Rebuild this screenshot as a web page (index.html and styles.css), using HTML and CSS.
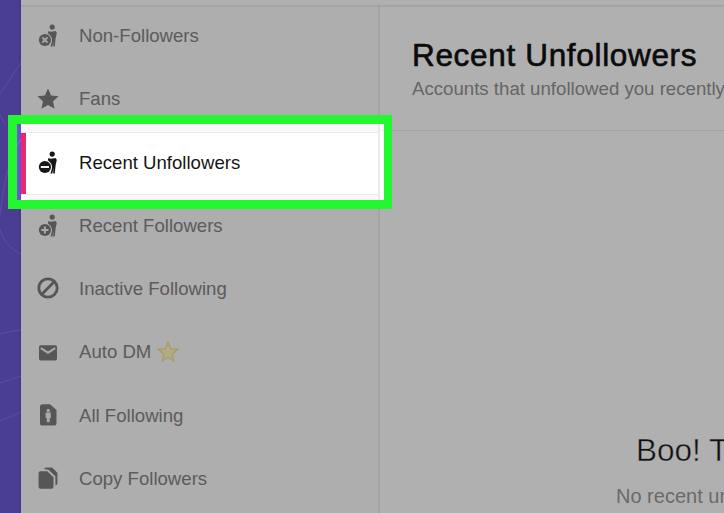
FILE: index.html
```
<!DOCTYPE html>
<html lang="en">
<head>
<meta charset="utf-8">
<title>Recent Unfollowers</title>
<link rel="stylesheet" href="styles.css">
</head>
<body>
<svg width="0" height="0" class="defs">
  <symbol id="person" viewBox="0 0 20 24">
    <circle cx="14.2" cy="3.1" r="2.6"/>
    <path d="M10.2 7.2L13 7.8 17.3 6.9Q19 7.4 18.7 9.6L17.6 14.2L16.8 22.6H15.2L15.4 17L14.4 22.6H12.5L14 17Q14.4 12.5 9.8 9.2Z"/>
    <circle cx="6.9" cy="16" r="6.1"/>
  </symbol>
</svg>
<div class="app">
  <aside class="rail">
    <svg viewBox="0 0 21 513" fill="none"><path d="M-2 97L21 63M0 114L5 125M0 215Q6 160 21 139M0 229Q3 245 21 254M0 334Q10 331 21 330M0 383L21 376M0 421L21 412"/></svg>
  </aside>
  <div class="page">
    <header class="topbar"></header>
    <div class="columns">
      <nav class="menu">
        <a class="item"><svg class="icon" viewBox="0 0 20 24"><use href="#person"/><path class="cut" d="M4.3 13.4l5.2 5.2m0-5.2l-5.2 5.2"/></svg><span>Non-Followers</span></a>
        <a class="item"><svg class="icon star" viewBox="0 0 22 22"><path d="M11 .4l3.1 7 7.5.8-5.6 5 1.6 7.5-6.6-3.8-6.6 3.8L6 13.2l-5.6-5 7.5-.8z"/></svg><span>Fans</span></a>
        <a class="item active"><svg class="icon" viewBox="0 0 20 24"><use href="#person"/><path class="cut" d="M2.8 16h8.2"/></svg><span>Recent Unfollowers</span></a>
        <a class="item"><svg class="icon" viewBox="0 0 20 24"><use href="#person"/><path class="cut" d="M3.3 16h7.2M6.9 12.4v7.2"/></svg><span>Recent Followers</span></a>
        <a class="item"><svg class="icon ban" viewBox="0 0 22 22"><circle cx="11" cy="10" r="9.2"/><path d="M4.6 16.4L17.4 3.6"/></svg><span>Inactive Following</span></a>
        <a class="item"><svg class="icon" viewBox="0 0 20 24"><rect x="1" y="5.2" width="18" height="15.3" rx="1.8"/><path class="cut" d="M2.8 8.1L10 12.7l7.2-4.6"/></svg><span>Auto DM</span><svg class="gold" viewBox="0 0 22 22"><path d="M11 1.2l2.7 6.5 7.1.6-5.4 4.7 1.6 7-6-3.6L5 20l1.6-7-5.4-4.7 7.1-.6z"/></svg></a>
        <a class="item"><svg class="icon" viewBox="0 0 20 24"><path d="M4.5 .2H12l6.5 5.8V18.9q0 2.6-2.6 2.6H4.4Q2 21.5 2 18.9V2.8q0-2.6 2.5-2.6z"/><g class="light"><circle cx="10.2" cy="6.4" r="1.6"/><path d="M7.6 8.5h5.2v5.4h-1.1v4.3H8.8v-4.3H7.6z"/></g></svg><span>All Following</span></a>
        <a class="item"><svg class="icon" viewBox="0 0 20 24"><path d="M6 2.1Q6.6.5 8.2.5H14l5.4 5.2V16.5q0 1.8-2 1.8V9.2L10.5 2.7z"/><path d="M2.4 4.2h6.9l6.2 6v9.6q0 2-2 2H2.6q-2 0-2-2V6.2q0-2 1.8-2z"/></svg><span>Copy Followers</span></a>
      </nav>
      <main class="content">
        <section class="head">
          <h1>Recent Unfollowers</h1>
          <p>Accounts that unfollowed you recently</p>
        </section>
        <section class="empty">
          <h2>Boo! T</h2>
          <p>No recent unfollowers</p>
        </section>
      </main>
    </div>
  </div>
</div>
<div class="spotlight"></div>
</body>
</html>
```
FILE: styles.css
```
* { box-sizing: border-box; }
body {
  margin: 0;
  width: 724px;
  height: 513px;
  overflow: hidden;
  font-family: "Liberation Sans", Arial, sans-serif;
}
.defs { position: absolute; }
.app { display: flex; width: 724px; height: 513px; overflow: hidden; }
.rail {
  flex: 0 0 21px;
  background: linear-gradient(90deg, #6b59d5 0 85%, #6050c3);
}
.rail svg { display: block; width: 21px; height: 513px; stroke: #8072dc; stroke-width: 1; }
.page { flex: 1; min-width: 0; display: flex; flex-direction: column; background: #fdfdfd; }
.topbar { height: 7px; flex: none; border-bottom: 2px solid #ebebeb; }
.columns { flex: 1; display: flex; min-height: 0; }
.menu {
  flex: 0 0 359px;
  margin-top: -3px;
  border-right: 2px solid #ebebed;
  background: linear-gradient(#0000 3px, #f9f9f9 3px);
}
.item {
  display: flex;
  align-items: center;
  height: 63.33px;
  padding-left: 16.5px;
  color: #848484;
  font-size: 18.6px;
  white-space: nowrap;
}
.icon { width: 20px; height: 24px; margin-right: 21.5px; fill: #7c7c7c; }
.icon.star, .icon.ban { width: 22px; height: 22px; margin: 0 20.5px 0 -1px; }
.icon.ban { fill: none; stroke: #7c7c7c; stroke-width: 2.8; overflow: visible; }
.cut { fill: none; stroke: #f2f2f2; stroke-width: 2; }
.light { fill: #f4f4f4; }
.gold { width: 22px; height: 22px; margin-left: 6px; fill: #fff5bd; stroke: #f2d98c; stroke-width: 1.1; }
.active {
  height: 61.33px;
  margin: 2px 0 0;
  padding-left: 11.5px;
  color: #161616;
  background: #fff;
  border-left: 5px solid #ed2474;
  box-shadow: 0 -1px #eaeaea, 0 1px #eaeaea;
}
.active .icon { fill: #161616; }
.content { flex: 1; min-width: 0; overflow: hidden; }
.head {
  height: 124px;
  padding: 29px 0 0 32px;
  border-bottom: 1px solid #ededed;
  white-space: nowrap;
}
h1 {
  margin: 0;
  font-size: 31.5px;
  line-height: 38px;
  font-weight: 400;
  letter-spacing: .67px;
  color: #111;
  -webkit-text-stroke: .65px #111;
}
.head p { margin: 4px 0 0; font-size: 18.65px; line-height: 22px; color: #919191; }
.empty {
  width: 420px;
  padding: 299px 0 0 236px;
  white-space: nowrap;
}
h2 {
  margin: 0 0 0 20px;
  font-size: 31.5px;
  line-height: 40px;
  font-weight: 400;
  color: #161616;
  -webkit-text-stroke: .45px #fdfdfd;
}
.empty p { margin: 14px 0 0; font-size: 20px; line-height: 24px; color: #989898; }
.spotlight {
  position: absolute;
  left: 8px;
  top: 115px;
  width: 384px;
  height: 94px;
  border: solid #22f72f;
  border-width: 9px 8px 9px 9px;
  box-shadow: 0 0 0 800px rgba(0, 0, 0, .3);
}
```
